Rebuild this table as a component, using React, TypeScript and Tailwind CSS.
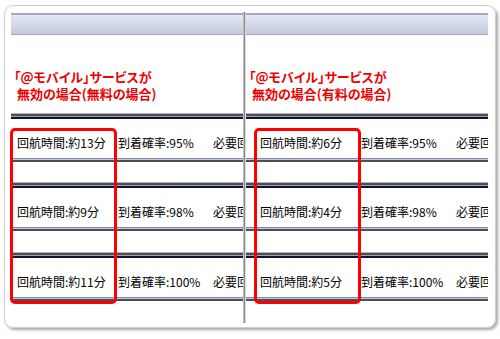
const rows = [
  { left: ["回航時間:約13分", "到着確率:95%"], right: ["回航時間:約6分", "到着確率:95%"], gap: "" },
  { left: ["回航時間:約9分", "到着確率:98%"], right: ["回航時間:約4分", "到着確率:98%"], gap: "mt-[20px]" },
  { left: ["回航時間:約11分", "到着確率:100%"], right: ["回航時間:約5分", "到着確率:100%"], gap: "mt-[21px]" },
];

const TopSep = () => (
  <div className="flex flex-col">
    <div className="h-px bg-[#b4b4b8]" />
    <div className="h-[2px] bg-[#4e4e52]" />
    <div className="h-px bg-[#9ca2bc]" />
    <div className="h-[2px] bg-[#0e1636]" />
  </div>
);

const BottomSep = () => (
  <div className="flex flex-col">
    <div className="h-px bg-[#7a88b4]" />
    <div className="h-px bg-[#c4c9de]" />
    <div className="h-[2px] bg-[#4e4e52]" />
  </div>
);

const Column = ({
  width,
  label,
  side,
  textPad,
}: {
  width: string;
  label: string;
  side: "left" | "right";
  textPad: string;
}) => (
  <div className={`${width} h-[311px] overflow-hidden flex flex-col`}>
    <div className="mt-[1px] h-[22px] border-t-2 border-b border-[#a2aac8] bg-gradient-to-b from-[#e6e9f2] to-[#c2c8dd]" />

    <div className="mt-[33px] pl-[3px] text-[13px] leading-[17px] font-bold text-[#ee0000] whitespace-nowrap [font-feature-settings:'palt']">
      <div>「@モバイル」サービスが</div>
      <div className="pl-[3px]">無効の場合({label}の場合)</div>
    </div>

    <div className="mt-[11px] flex flex-col">
      {rows.map((r, i) => {
        const cells = side === "left" ? r.left : r.right;
        return (
          <div key={i} className={r.gap}>
            <TopSep />
            <div
              className={`flex ${textPad} pt-[16px] pb-[7px] text-[12px] leading-[16px] text-black whitespace-nowrap`}
            >
              <span className="w-[101px] shrink-0">{cells[0]}</span>
              <span className="w-[95px] shrink-0">{cells[1]}</span>
              <span>必要回数</span>
            </div>
            <BottomSep />
          </div>
        );
      })}
    </div>
  </div>
);

export default function App() {
  return (
    <div className="relative w-[500px] h-[339px] bg-white pt-[5px] pl-[4px] font-['Noto_Sans_CJK_JP',sans-serif]">
      <div className="w-[492px] h-[323px] border border-[#cfcfcf] rounded-[9px] shadow-[2px_2px_3px_rgba(0,0,0,0.35)] pl-[6px] pt-[6px] pr-[7px] pb-[4px] flex">
        <Column width="w-[232px]" label="無料" side="left" textPad="pl-[6px]" />
        <div className="w-[3px] h-[311px] flex">
          <div className="w-px bg-[#bdbdbd]" />
          <div className="w-px bg-[#8a8a8a]" />
          <div className="w-px bg-[#dadada]" />
        </div>
        <Column width="w-[242px]" label="有料" side="right" textPad="pl-[14px]" />
      </div>

      <div className="absolute left-[10px] top-[128px] w-[107px] h-[176px] border-[3px] border-[#ff0000] rounded-[5px]" />
      <div className="absolute left-[254px] top-[128px] w-[107px] h-[176px] border-[3px] border-[#ff0000] rounded-[5px]" />
    </div>
  );
}
